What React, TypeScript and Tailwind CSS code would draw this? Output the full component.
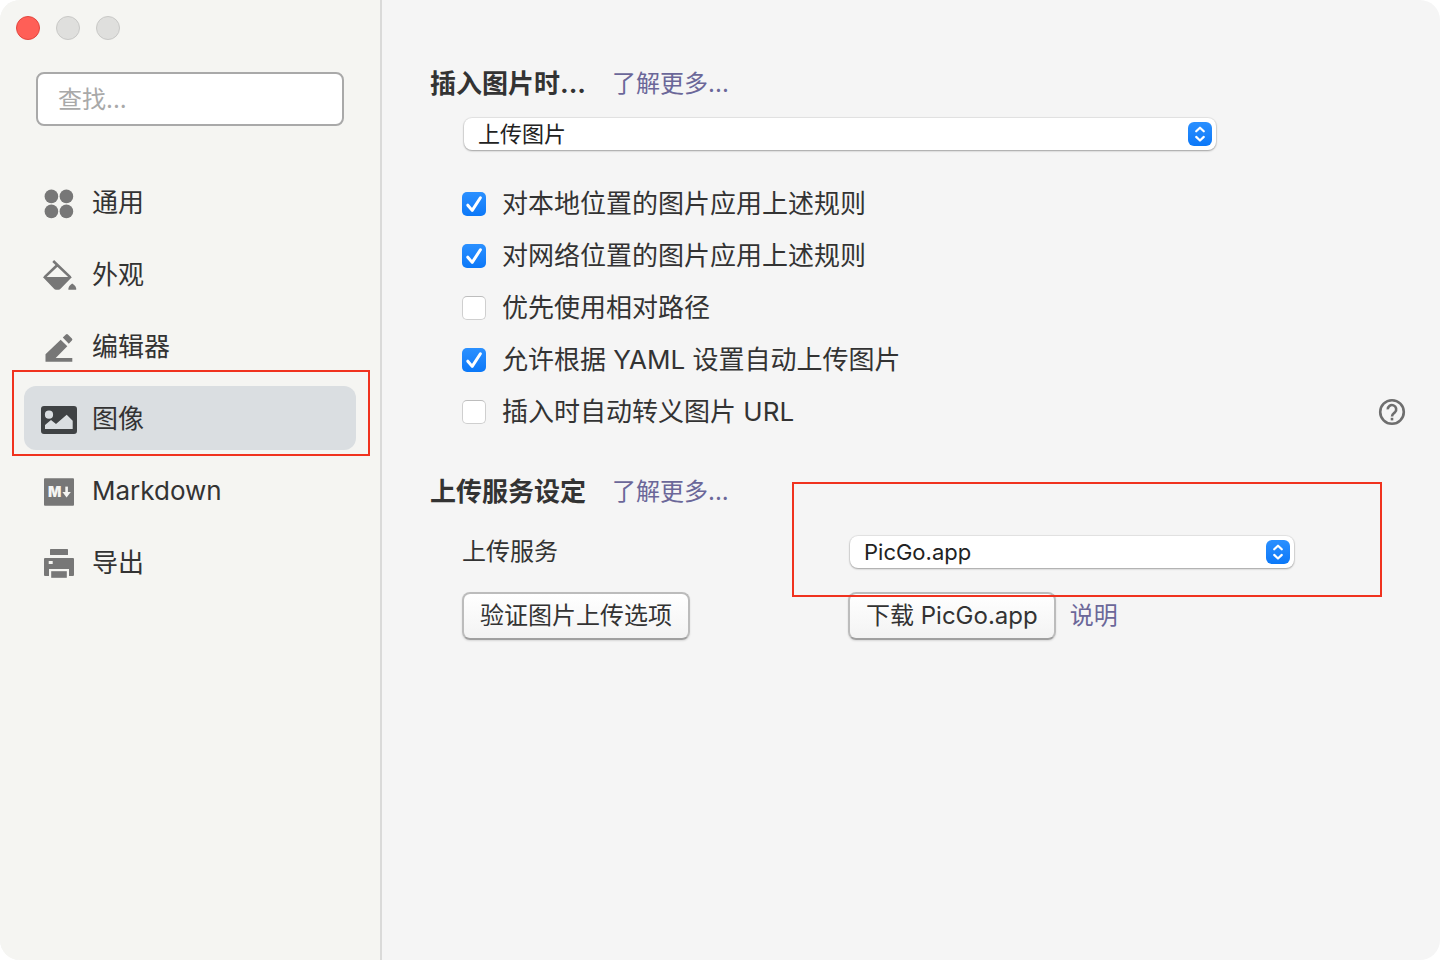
import React, { useState } from 'react';

interface NavItem {
  id: string;
  label: string;
  icon: React.ReactNode;
}

interface Option {
  id: string;
  label: string;
  checked: boolean;
}

const iconProps = {
  viewBox: '0 0 38 38',
  className: 'w-[38px] h-[38px] shrink-0',
  fill: 'currentColor',
  'aria-hidden': true,
};

const navItems: NavItem[] = [
  {
    id: 'general',
    label: '通用',
    icon: (
      <svg {...iconProps}>
        <circle cx="11.4" cy="13.4" r="6.8" />
        <circle cx="26.4" cy="13.4" r="6.8" />
        <circle cx="11.4" cy="28.4" r="6.8" />
        <circle cx="26.4" cy="28.4" r="6.8" />
      </svg>
    ),
  },
  {
    id: 'appearance',
    label: '外观',
    icon: (
      <svg {...iconProps}>
        <path d="M13.2 6 30.4 22.4M17.4 10 4.4 22.4" fill="none" stroke="currentColor" strokeWidth="2.6" />
        <path d="M2.8 22h29.2L20.8 33.6q-1 1.2-2.4 1.2h-2.2q-1.4 0-2.4-1.2z" />
        <path d="M28.4 34.8q-.6-3.6 3.8-6.4 4.6 2.8 4 6.4z" />
      </svg>
    ),
  },
  {
    id: 'editor',
    label: '编辑器',
    icon: (
      <svg {...iconProps}>
        <path d="M5.5 34.7v-7.4L20.7 12.7l6.6 6.6L15.7 31h16.6v3.7z" />
        <path d="m22.8 10.6 3.1-3q1-1 2 0l4 4q1 1 0 2l-3.1 3.2z" />
      </svg>
    ),
  },
  {
    id: 'image',
    label: '图像',
    icon: (
      <svg {...iconProps}>
        <path
          fillRule="evenodd"
          d="M4 7h30a3 3 0 0 1 3 3v22a3 3 0 0 1-3 3H4a3 3 0 0 1-3-3V10a3 3 0 0 1 3-3zM9 11.6a4.1 4.1 0 1 0 0 8.2 4.1 4.1 0 0 0 0-8.2zM5 30h27.7v-8.3l-6-6L16 25l-5-4-6 5z"
        />
      </svg>
    ),
  },
  {
    id: 'markdown',
    label: 'Markdown',
    icon: (
      <svg {...iconProps}>
        <rect x="4" y="7.3" width="30" height="27.4" rx="1" />
        <text x="8" y="26.2" fontSize="14" fontWeight="900" className="fill-[#f5f5f2]">M</text>
        <path d="M26.6 15.6v6" stroke="#f5f5f2" strokeWidth="2.6" />
        <path d="M22.4 21h8.4l-4.2 5.4z" fill="#f5f5f2" />
      </svg>
    ),
  },
  {
    id: 'export',
    label: '导出',
    icon: (
      <svg {...iconProps}>
        <rect x="10" y="6" width="18" height="6" rx=".6" />
        <path fillRule="evenodd" d="M5 15h28a1 1 0 0 1 1 1v16a1 1 0 0 1-1 1h-4v-7H9v7H5a1 1 0 0 1-1-1V16a1 1 0 0 1 1-1zm3.7 3v3h4v-3z" />
        <rect x="11.2" y="28.2" width="15.6" height="6.6" />
      </svg>
    ),
  },
];

const initialOptions: Option[] = [
  { id: 'local', label: '对本地位置的图片应用上述规则', checked: true },
  { id: 'network', label: '对网络位置的图片应用上述规则', checked: true },
  { id: 'relative', label: '优先使用相对路径', checked: false },
  { id: 'yaml', label: '允许根据 YAML 设置自动上传图片', checked: true },
  { id: 'escape', label: '插入时自动转义图片 URL', checked: false },
];

const Popup: React.FC<{ id: string; label: string; options: string[] }> = ({ id, label, options }) => (
  <div className="relative">
    <select
      id={id}
      aria-label={label}
      className="block w-full h-8 pl-3.5 pr-10 appearance-none rounded-lg bg-white text-[22px] leading-8 text-[#222] shadow-[0_0_1px_1px_rgba(0,0,0,0.07),0_1px_2px_rgba(0,0,0,0.3)]"
    >
      {options.map(option => (
        <option key={option}>{option}</option>
      ))}
    </select>
    <span className="absolute top-1 right-1 w-6 h-6 rounded-md bg-linear-to-b from-[#2a90ff] to-[#0a78f8] pointer-events-none">
      <svg viewBox="0 0 24 24" fill="none" stroke="#fff" strokeWidth="2.2" strokeLinecap="round" strokeLinejoin="round" aria-hidden="true">
        <path d="m8.2 9.3 3.8-3.6 3.8 3.6M8.2 14.9l3.8 3.6 3.8-3.6" />
      </svg>
    </span>
  </div>
);

const Checkbox: React.FC<{ option: Option; onChange: () => void }> = ({ option, onChange }) => (
  <label className="flex items-center gap-4 h-13 text-[26px] leading-8">
    <span className="relative w-6 h-6 shrink-0">
      <input
        type="checkbox"
        checked={option.checked}
        onChange={onChange}
        className="peer block w-6 h-6 appearance-none rounded-[5px] bg-white border border-[#cfcfcf] border-t-[#bdbdbd] checked:border-0 checked:bg-linear-to-b checked:from-[#2a90ff] checked:to-[#0a78f8]"
      />
      <svg
        viewBox="0 0 24 24"
        className="absolute inset-0 hidden peer-checked:block pointer-events-none"
        fill="none"
        stroke="#fff"
        strokeWidth="3"
        strokeLinecap="round"
        strokeLinejoin="round"
        aria-hidden="true"
      >
        <path d="m5.8 13.2 4.4 5.2 8.2-12.6" />
      </svg>
    </span>
    {option.label}
  </label>
);

const buttonClass =
  'h-12 px-4 rounded-lg border-2 border-[#bcbcbc] border-b-[#a0a0a0] bg-linear-to-b from-white to-[#f3f3f3] text-2xl text-[#333] whitespace-nowrap shadow-[0_1px_2px_rgba(0,0,0,0.12)]';
const linkClass = 'text-2xl leading-8 text-[#6b6799]';

const App: React.FC = () => {
  const [active, setActive] = useState('image');
  const [options, setOptions] = useState<Option[]>(initialOptions);

  const toggle = (id: string) => {
    setOptions(options.map(o => (o.id === id ? { ...o, checked: !o.checked } : o)));
  };

  return (
    <div className="bg-white">
      <div className="flex min-h-screen overflow-hidden rounded-[20px] bg-[#f5f5f5] text-[#333] font-[Inter,'Noto_Sans_CJK_SC',sans-serif]">
        <aside className="w-[382px] shrink-0 border-r-2 border-[#dadad9] bg-[#f5f5f2]">
          <div className="flex gap-4 pt-4 pl-4">
            <button aria-label="关闭" className="w-6 h-6 rounded-full bg-[#ff5f57] border border-[#e2463f]" />
            <button aria-label="最小化" className="w-6 h-6 rounded-full bg-[#dfdfdd] border border-[#c8c8c6]" />
            <button aria-label="缩放" className="w-6 h-6 rounded-full bg-[#dfdfdd] border border-[#c8c8c6]" />
          </div>

          <div className="mt-8 px-9">
            <input
              type="text"
              aria-label="查找"
              placeholder="查找..."
              className="block w-full h-[54px] px-5 rounded-lg border-2 border-[#a9a9a9] bg-white text-2xl placeholder:text-[#a9a9a9]"
            />
          </div>

          <nav className="flex flex-col gap-2 mt-11 px-6">
            {navItems.map(item => (
              <div key={item.id} className="relative">
                <button
                  onClick={() => setActive(item.id)}
                  className={`flex items-center gap-3.5 w-full h-16 pl-4 rounded-xl text-[26px] ${
                    active === item.id ? 'bg-[#dadee1]' : ''
                  }`}
                >
                  <span className={active === item.id ? 'text-[#3f4244]' : 'text-[#777]'}>{item.icon}</span>
                  <span>{item.label}</span>
                </button>
                {item.id === 'image' && (
                  <div className="absolute -top-4 -bottom-1.5 -left-3 -right-3.5 border-2 border-[#f0321e] pointer-events-none" />
                )}
              </div>
            ))}
          </nav>
        </aside>

        <main className="flex-1 min-w-0 pt-17 pl-12 pr-[34px]">
          <section>
            <div className="flex items-center gap-[26px]">
              <h2 className="text-[26px] leading-8 font-bold">插入图片时...</h2>
              <a href="#insert" className={linkClass}>了解更多...</a>
            </div>
            <div className="pl-8">
              <div className="mt-[18px] px-0.5 max-w-[756px]">
                <Popup id="insert-action" label="插入图片时" options={['上传图片', '无特殊操作']} />
              </div>
              <div className="mt-7">
                {options.map(option => (
                  <div key={option.id} className="flex items-center justify-between">
                    <Checkbox option={option} onChange={() => toggle(option.id)} />
                    {option.id === 'escape' && (
                      <button aria-label="帮助" className="text-[#6e6e6e]">
                        <svg viewBox="0 0 28 28" className="w-7 h-7" fill="none" stroke="currentColor" strokeWidth="2.6" aria-hidden="true">
                          <circle cx="14" cy="14" r="11.8" />
                          <path d="M9.8 11.4a4.2 4.2 0 1 1 7.2 2.8c-1.4 1.3-3 2-3 4.2" />
                          <path d="M14 19.8v2.6" />
                        </svg>
                      </button>
                    )}
                  </div>
                ))}
              </div>
            </div>
          </section>

          <section className="mt-9.5">
            <div className="flex items-center gap-[26px]">
              <h2 className="text-[26px] leading-8 font-bold">上传服务设定</h2>
              <a href="#upload" className={linkClass}>了解更多...</a>
            </div>
            <div className="grid grid-cols-[386px_1fr] items-center gap-y-6 mt-7 pl-8">
              <label htmlFor="upload-service" className="text-2xl leading-8">上传服务</label>
              <div className="relative">
                <div className="px-0.5 max-w-[448px]">
                  <Popup id="upload-service" label="上传服务" options={['PicGo.app', 'iPic']} />
                </div>
                <div className="absolute -top-[54px] -bottom-[29px] -left-14 right-6 z-10 border-2 border-[#f0321e] pointer-events-none" />
              </div>
              <div>
                <button className={buttonClass}>验证图片上传选项</button>
              </div>
              <div className="flex items-center gap-3.5">
                <button className={buttonClass}>下载 PicGo.app</button>
                <a href="#help" className={linkClass}>说明</a>
              </div>
            </div>
          </section>
        </main>
      </div>
    </div>
  );
};

export default App;
